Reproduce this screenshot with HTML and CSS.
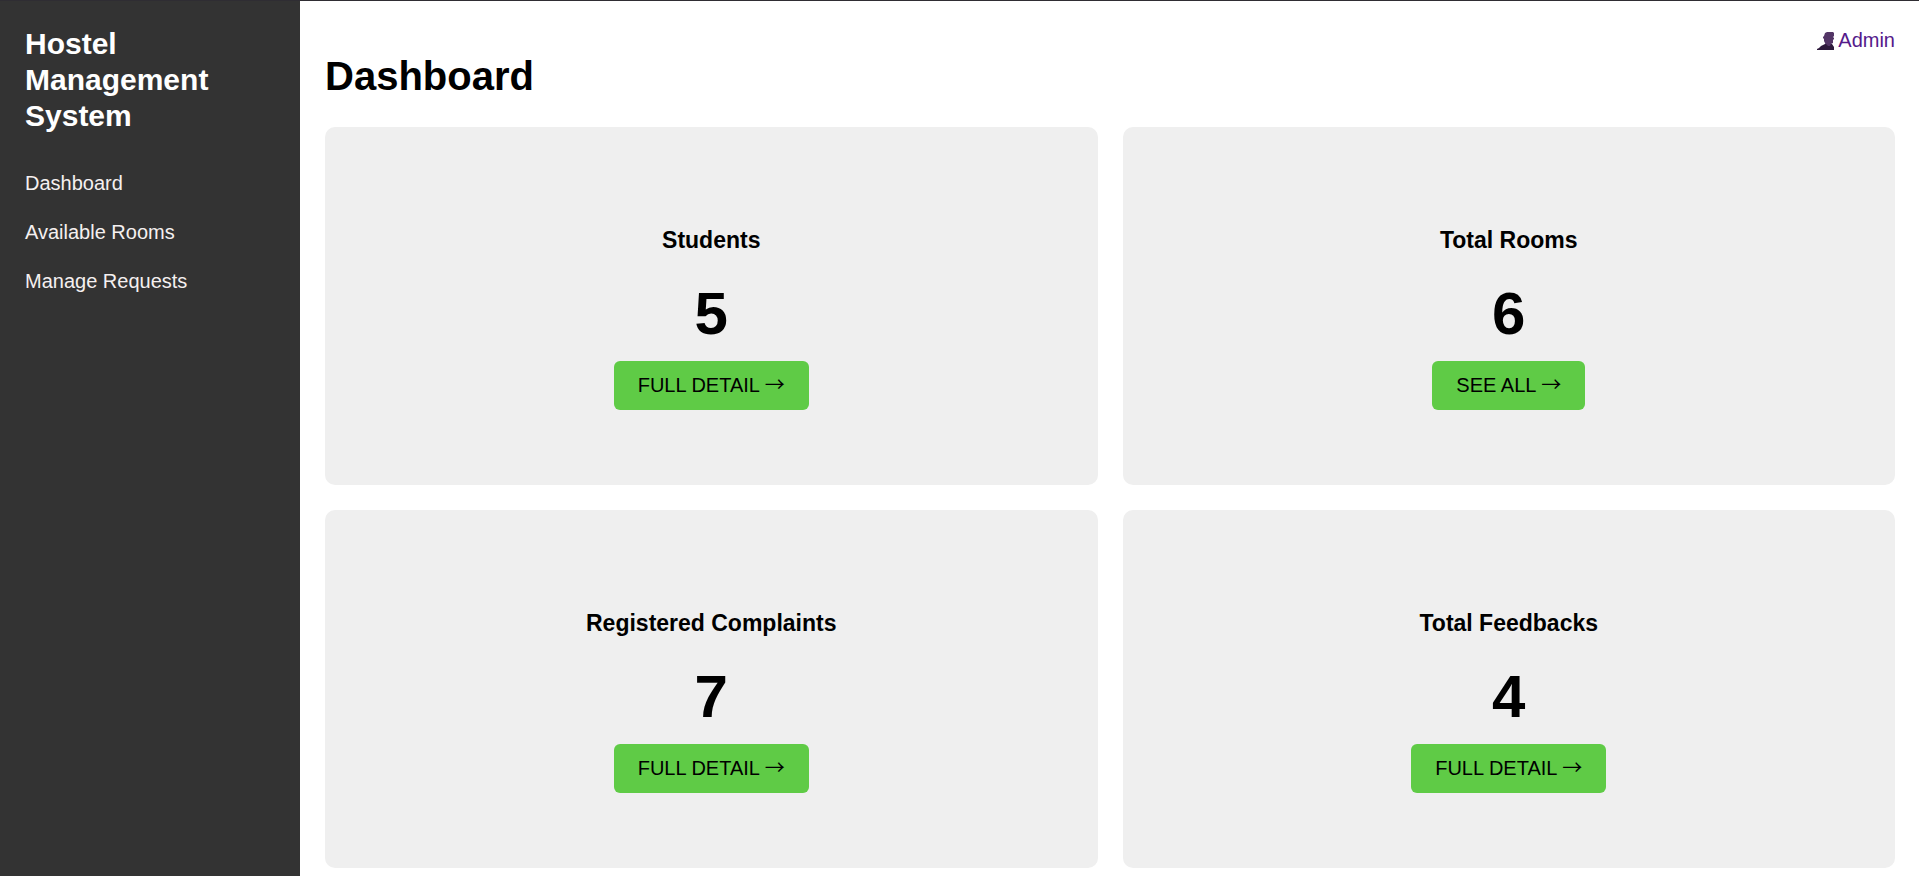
FILE: index.html
```html
<!DOCTYPE html>
<html lang="en">
<head>
<meta charset="utf-8">
<title>Hostel Management System</title>
<link rel="stylesheet" href="styles.css">
</head>
<body>
<div class="layout">
  <aside class="sidebar">
    <h2 class="brand">Hostel Management System</h2>
    <nav class="menu">
      <a href="#">Dashboard</a>
      <a href="#">Available Rooms</a>
      <a href="#">Manage Requests</a>
    </nav>
  </aside>
  <main class="main">
    <header class="header">
      <h1 class="title">Dashboard</h1>
      <a class="admin" href="#">
        <svg class="admin-icon" viewBox="0 0 17 18" aria-hidden="true">
          <path fill="#533566" d="M10 0h6l1 1v3l-1 1 1 1v1l-1 1v3l-2 1v3H9l-1-4-1-2V7L6 6V5l1-1 1-3z"/>
          <path fill="#2e1a3c" d="M0 18v-1l2-1 2-2 4-2h1l2 2h2l1-2h1l2 3v3z"/>
        </svg>
        <span>Admin</span>
      </a>
    </header>
    <section class="cards">
      <article class="card">
        <h3 class="card-title">Students</h3>
        <p class="count">5</p>
        <button class="action" type="button">FULL DETAIL <span class="arrow">→</span></button>
      </article>
      <article class="card">
        <h3 class="card-title">Total Rooms</h3>
        <p class="count">6</p>
        <button class="action" type="button">SEE ALL <span class="arrow">→</span></button>
      </article>
      <article class="card">
        <h3 class="card-title">Registered Complaints</h3>
        <p class="count">7</p>
        <button class="action" type="button">FULL DETAIL <span class="arrow">→</span></button>
      </article>
      <article class="card">
        <h3 class="card-title">Total Feedbacks</h3>
        <p class="count">4</p>
        <button class="action" type="button">FULL DETAIL <span class="arrow">→</span></button>
      </article>
    </section>
  </main>
</div>
</body>
</html>
```
FILE: styles.css
```css
* {
  box-sizing: border-box;
}

body {
  margin: 0;
  background: #fff;
  color: #000;
  font-family: "Liberation Sans", Arial, sans-serif;
  font-size: 20px;
  line-height: 23px;
}

h1, h2, h3, p {
  margin: 0;
}

.layout {
  display: flex;
  min-height: 100vh;
  border-top: 1px solid #2f2d33;
}

.sidebar {
  flex: none;
  width: 300px;
  padding: 25px;
  background: #333;
  color: #fff;
}

.brand {
  margin-bottom: 38px;
  font-size: 30px;
  line-height: 36px;
}

.menu {
  display: flex;
  flex-direction: column;
  gap: 26px;
}

.menu a {
  color: #f5f0f0;
  text-decoration: none;
}

.main {
  flex: 1;
  display: flex;
  flex-direction: column;
  padding: 25px 24px 8px 25px;
}

.header {
  display: flex;
  justify-content: space-between;
  align-items: flex-start;
  margin-bottom: 28px;
}

.title {
  padding-top: 27px;
  font-size: 40px;
  line-height: 46px;
}

.admin {
  display: flex;
  align-items: center;
  gap: 4px;
  padding-top: 3px;
  color: #551a8b;
  text-decoration: none;
}

.admin-icon {
  width: 17px;
  height: 18px;
}

.cards {
  flex: 1;
  display: grid;
  grid-template-columns: 1fr 1fr;
  grid-auto-rows: 1fr;
  gap: 25px;
}

.card {
  display: flex;
  flex-direction: column;
  align-items: center;
  justify-content: center;
  padding: 25px;
  border-radius: 10px;
  background: #efefef;
}

.card-title {
  margin: 24px 0 25px;
  font-size: 23px;
  line-height: 27px;
}

.count {
  margin-bottom: 13px;
  font-size: 60px;
  font-weight: bold;
  line-height: 69px;
}

.action {
  padding: 13px 24px;
  border: 0;
  border-radius: 6px;
  background: #5fcb46;
  color: #000;
  font: inherit;
  cursor: pointer;
}

.arrow {
  font-family: "Noto Sans CJK JP", "Liberation Sans", sans-serif;
  line-height: 0;
}
```
